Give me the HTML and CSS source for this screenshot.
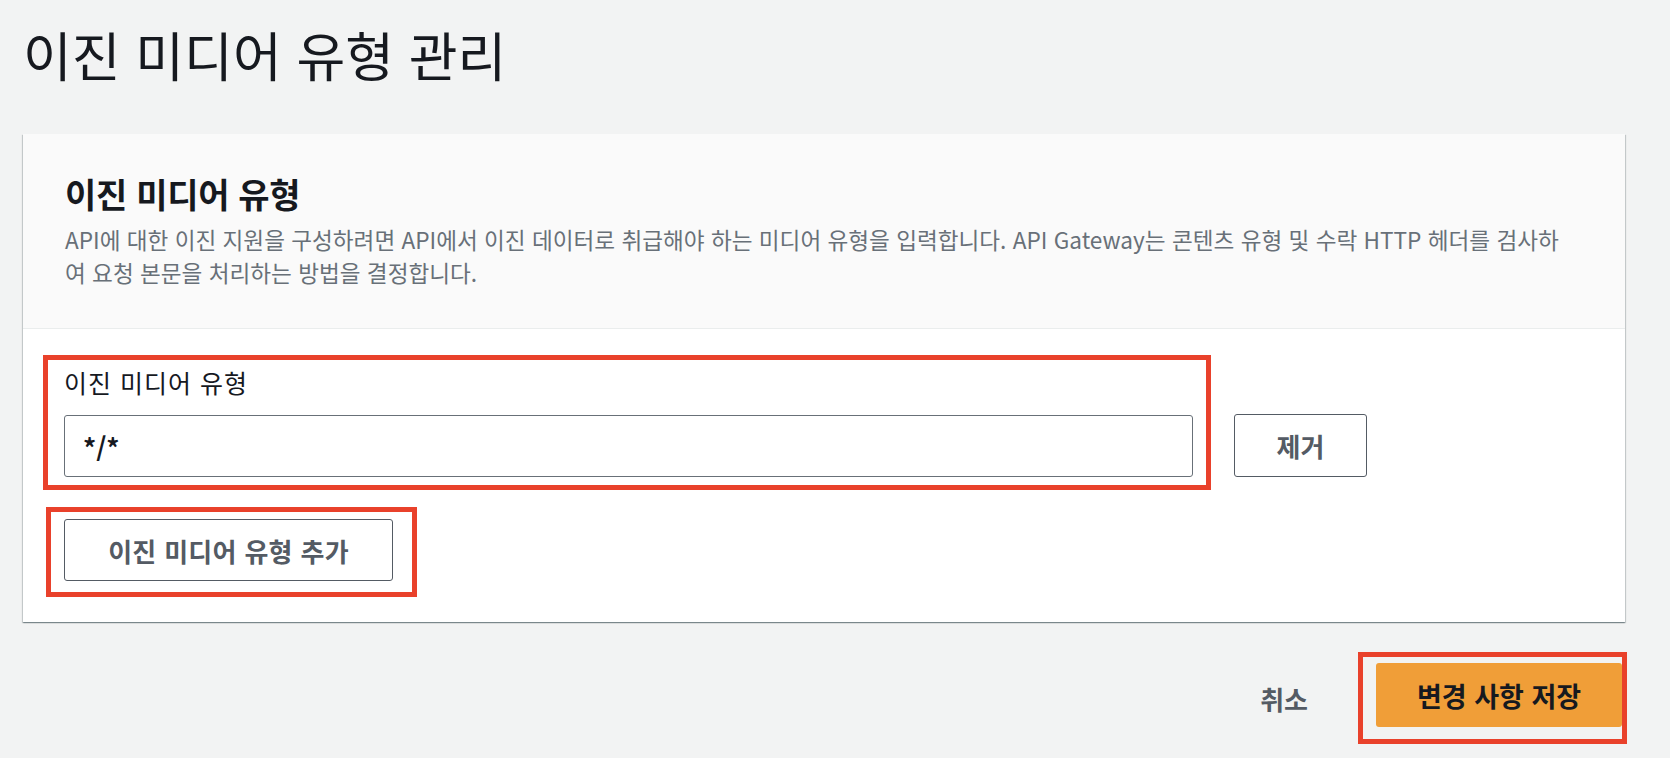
FILE: index.html
```html
<!DOCTYPE html>
<html lang="ko">
<head>
<meta charset="utf-8">
<title>이진 미디어 유형 관리</title>
<link rel="stylesheet" href="styles.css">
</head>
<body>
<main class="page">
  <h1 class="page-title">이진 미디어 유형 관리</h1>
  <section class="card">
    <header class="card-header">
      <h2 class="card-title">이진 미디어 유형</h2>
      <p class="card-desc">API에 대한 이진 지원을 구성하려면 API에서 이진 데이터로 취급해야 하는 미디어 유형을 입력합니다. API Gateway는 콘텐츠 유형 및 수락 HTTP 헤더를 검사하<br>여 요청 본문을 처리하는 방법을 결정합니다.</p>
    </header>
    <div class="card-body">
      <div class="field-row">
        <div class="mark mark-field">
          <label class="field-label" for="media">이진 미디어 유형</label>
          <input class="text-input" id="media" type="text" value="*/*" readonly>
        </div>
        <button class="btn btn-remove" type="button">제거</button>
      </div>
      <div class="mark mark-add">
        <button class="btn btn-add" type="button">이진 미디어 유형 추가</button>
      </div>
    </div>
  </section>
  <div class="footer">
    <button class="link-btn" type="button">취소</button>
    <div class="mark mark-save">
      <button class="btn-primary" type="button">변경 사항 저장</button>
    </div>
  </div>
</main>
</body>
</html>
```

FILE: styles.css
```css
* { box-sizing: border-box; }

html, body {
  margin: 0;
  padding: 0;
  background: #f2f3f3;
}

body {
  font-family: "Noto Sans CJK KR", "Noto Sans", sans-serif;
  color: #16191f;
}

.page {
  padding: 18px 45px 0 23px;
}

.page-title {
  margin: 0 0 44px 0;
  font-size: 53px;
  font-weight: 400;
  line-height: 72px;
  letter-spacing: 0;
  color: #16191f;
}

.card {
  background: #ffffff;
  box-shadow: 0 1px 1px 0 rgba(0, 28, 36, 0.3), 1px 1px 1px 0 rgba(0, 28, 36, 0.15), -1px 1px 1px 0 rgba(0, 28, 36, 0.15);
}

.card-header {
  background: #fafafa;
  border-bottom: 1px solid #eaeded;
  padding: 37px 42px 0 42px;
  height: 195px;
}

.card-title {
  margin: 0;
  font-size: 34px;
  font-weight: 700;
  line-height: 46px;
  letter-spacing: -0.3px;
}

.card-desc {
  margin: 6px 0 0 0;
  font-size: 22.6px;
  line-height: 33px;
  color: #687078;
  white-space: nowrap;
}

.card-body {
  padding: 26px 20px 25px 20px;
}

.field-row {
  display: flex;
  align-items: flex-end;
}

.mark {
  border: 5px solid #e9412b;
}

.mark-field {
  width: 1168px;
  padding: 5px 13px 8px 16px;
  display: flex;
  flex-direction: column;
}

.field-label {
  font-size: 25px;
  line-height: 34px;
  letter-spacing: 1px;
  margin-bottom: 16px;
  color: #16191f;
}

.text-input {
  display: block;
  width: 100%;
  height: 62px;
  border: 1px solid #687078;
  border-radius: 3px;
  background: #ffffff;
  padding: 0 18px;
  font-family: inherit;
  font-size: 26px;
  font-weight: 700;
  color: #16191f;
  outline: none;
}

.btn {
  font-family: inherit;
  font-weight: 700;
  font-size: 26px;
  color: #545b64;
  background: #ffffff;
  border: 1px solid #545b64;
  border-radius: 3px;
  height: 63px;
  padding: 0;
  cursor: pointer;
}

.btn-remove {
  width: 133px;
  margin: 0 0 13px 23px;
}

.mark-add {
  display: inline-block;
  margin: 17px 0 0 3px;
  padding: 7px 19px 11px 13px;
}

.btn-add {
  width: 329px;
  height: 62px;
  letter-spacing: 0.3px;
}

.footer {
  display: flex;
  justify-content: flex-end;
  align-items: center;
  margin: 30px -2px 0 0;
}

.link-btn {
  font-family: inherit;
  font-weight: 700;
  font-size: 26px;
  color: #545b64;
  background: none;
  border: none;
  padding: 0;
  margin-right: 50px;
  cursor: pointer;
}

.mark-save {
  padding: 6px 0 12px 13px;
}

.btn-primary {
  display: block;
  width: 246px;
  height: 64px;
  border: none;
  border-radius: 3px;
  background: #f09e38;
  font-family: inherit;
  font-size: 27px;
  font-weight: 700;
  color: #16191f;
  cursor: pointer;
}
```
